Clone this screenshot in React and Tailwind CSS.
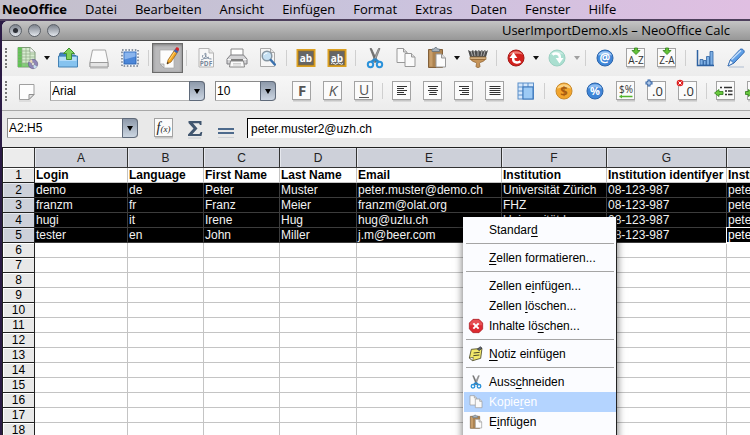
const sheetFont = 'font-["Liberation_Sans",Arial,sans-serif]';

/* ---------- toolbar drawings, all on a 24 x 24 field ---------- */

function Svg({ children, size = "size-6" }) {
  return (
    <svg viewBox="0 0 24 24" className={`${size} shrink-0`} fill="none" aria-hidden="true">
      {children}
    </svg>
  );
}

function Tile({ children }) {
  return (
    <Svg>
      <rect x="3" y="21" width="18" height="1.5" fill="#b5b5b5" opacity="0.7" />
      <rect x="2.500" y="2.500" width="18" height="18" fill="#fbfbfb" stroke="#a3a3a3" />
      {children}
    </Svg>
  );
}

function SvgText({ x = 12, y, size, fill = "#555", bold, italic, children }) {
  return (
    <text
      x={x}
      y={y}
      fontSize={size}
      fill={fill}
      textAnchor="middle"
      fontWeight={bold ? 700 : 400}
      fontStyle={italic ? "italic" : "normal"}
      fontFamily="Open Sans, sans-serif"
    >
      {children}
    </text>
  );
}

const SheetIcon = () => (
  <Svg>
    <path d="M3 1.5h12l5 4.500v15H3z" fill="#d7ecd0" stroke="#7d9a76" />
    <path d="M3 1.500h4v19.500H3z" fill="#5fc452" />
    <path d="M3 17h17v4H3z" fill="#5fc452" opacity="0.7" />
    <path d="M3 5h13M3 8h17M3 11h17M3 14h17M3 17h17M7 2v19M11 2v19M15 2v19" stroke="#8fae88" strokeWidth="0.7" />
    <path d="M15 1.500v4.500h5z" fill="#fff" stroke="#8b9a88" strokeWidth="0.600" />
    <circle cx="18" cy="18" r="4.700" fill="#8f86b8" stroke="#5f5b80" strokeWidth="0.600" />
    <path d="M18 18l-4-2.500a4.700 4.700 0 0 1 3-2z" fill="#e9d9b8" />
    <path d="M18 18l4 2.500a4.700 4.700 0 0 1-3 2z" fill="#c7e2ef" />
    <circle cx="18" cy="18" r="1.400" fill="#fff" stroke="#666" strokeWidth="0.500" />
  </Svg>
);
const OpenIcon = () => (
  <Svg>
    <path d="M4 7h6l1 2h8l2 3H3z" fill="#3f86c2" stroke="#336a9c" />
    <path d="M2.500 10h19v11h-19z" fill="#86c3ef" stroke="#4482b4" />
    <path d="M3.500 11h17v4h-17z" fill="#b4dcf8" />
    <path d="M13 2l5.500 5.500h-3v6h-5v-6h-3z" fill="#7fd05b" stroke="#3f9033" />
  </Svg>
);
const DriveIcon = () => (
  <Svg>
    <path d="M5.500 4h13l2.500 12v5H3v-5z" fill="#fafafa" stroke="#a6a6a6" />
    <path d="M3 16.500h18v4.500H3z" fill="#e4e4e4" stroke="#9b9b9b" />
    <path d="M3 22.300h18" stroke="#c9c9c9" />
  </Svg>
);
const StampIcon = () => (
  <Svg>
    <rect x="4" y="4" width="16" height="16" fill="#fff" stroke="#8d97a6" strokeWidth="2" strokeDasharray="1.600 1.600" />
    <rect x="5" y="5" width="14" height="14" fill="#fff" />
    <rect x="6" y="6" width="12" height="12" fill="#4c87d9" stroke="#2f66b4" />
    <path d="M6.500 6.500h11v4l-11 3z" fill="#8ab5ee" />
  </Svg>
);
const EditIcon = () => (
  <Svg>
    <path d="M4 4h14v18H8l-4-4z" fill="#fcfcfc" stroke="#aaa" strokeWidth="0.700" />
    <path d="M4 18h4v4z" fill="#ddd" stroke="#999" strokeWidth="0.700" />
    <path d="M11 18l1-4 7-10.500 3 2L15 16z" fill="#f5a623" stroke="#8d5a16" strokeWidth="0.700" />
    <path d="M13 14.500l7-10.500" stroke="#ffd978" />
    <path d="M17.800 5.200l3 2 1.800-2.600-3-2z" fill="#3e62b4" />
    <path d="M19.200 3.200l3 2 .8-1.700c.2-1.700-1.700-2.700-2.800-1.900z" fill="#d3262b" />
    <path d="M11 18l.5-2 1.400.9z" fill="#222" />
  </Svg>
);
const PdfIcon = () => (
  <Svg>
    <path d="M5 2.500h10l4.500 4.500v14H5z" fill="#f8f8f8" stroke="#b5b5b5" />
    <path d="M15 2.500v4.500h4.500" fill="#e8e8e8" stroke="#b5b5b5" />
    <path d="M7 14c4-1 6-5 4.500-7-1.500 0 0 6 6 6M9 9c-2 3 2 5 6 2" stroke="#7f8fa2" />
    <SvgText y={20} size={6.500} fill="#78889b" bold>PDF</SvgText>
  </Svg>
);
const PrintIcon = () => (
  <Svg>
    <path d="M6 3h12v8H6z" fill="#fff" stroke="#888" />
    <path d="M5.500 9h13l3.500 4v5H2v-5z" fill="#d4d4d6" stroke="#7f7f82" />
    <path d="M2.500 13.500h19" stroke="#f8f8f8" />
    <path d="M6 14h12" stroke="#555" strokeWidth="1.500" />
    <path d="M5.500 15h13l1 6h-15z" fill="#f9f9f9" stroke="#888" />
    <path d="M8 17.500h8M8 19h8" stroke="#bbb" strokeWidth="0.700" />
  </Svg>
);
const PreviewIcon = () => (
  <Svg>
    <path d="M4.500 2.500h10l4 4v14h-14z" fill="#f6f6f6" stroke="#a9a9a9" />
    <path d="M14.500 2.500v4h4" fill="#e4e4e4" stroke="#a9a9a9" />
    <circle cx="11" cy="10" r="4.800" fill="#c5e0f3" stroke="#8796a2" strokeWidth="1.500" />
    <path d="M8.300 9a3 3 0 0 1 3-2" stroke="#fff" />
    <path d="M14.800 14l4 4.500" stroke="#3a71ae" strokeWidth="2.500" strokeLinecap="round" />
  </Svg>
);
const SpellIcon = ({ wave }) => (
  <Svg>
    <rect x="3.500" y="4" width="17" height="16" fill="#666" stroke="#dba022" strokeWidth="2" />
    <rect x="4.500" y="5" width="15" height="14" stroke="#8c6b2a" strokeWidth="0.700" />
    <SvgText y={15.500} size={10} fill="#fff" bold>ab</SvgText>
    {wave && <path d="M6 17.500q1.500-1.500 3 0t3 0 3 0 3 0" stroke="#fff" strokeWidth="1" />}
  </Svg>
);
const CutIcon = ({ size }) => (
  <Svg size={size}>
    <path d="M7 2.500l1.500 0 5.500 12-1.500 2z" fill="#777" stroke="#555" strokeWidth="0.600" />
    <path d="M17 2.500l-1.500 0-5.500 12 1.500 2z" fill="#aaa" stroke="#555" strokeWidth="0.600" />
    <path d="M12 13l-3.500 3M12 13l3.500 3" stroke="#2b87c9" strokeWidth="2.500" />
    <circle cx="7.500" cy="18.500" r="2.700" stroke="#2b92da" strokeWidth="2" />
    <circle cx="16.500" cy="18.500" r="2.700" stroke="#2b92da" strokeWidth="2" />
  </Svg>
);
const CopyIcon = ({ size }) => (
  <Svg size={size}>
    <path d="M3 2.500h6.500l3.500 3.500v10.500H3z" fill="#fafafa" stroke="#989898" />
    <path d="M9.500 2.500v3.500h3.500" fill="#ddd" stroke="#989898" />
    <path d="M11 7.500h6.500l3.500 3.500v9.500H11z" fill="#fafafa" stroke="#989898" />
    <path d="M17.500 7.500v3.500h3.500" fill="#ddd" stroke="#989898" />
  </Svg>
);
const PasteIcon = ({ size }) => (
  <Svg size={size}>
    <path d="M3.500 3.500h14v18h-14z" fill="#ad8350" stroke="#82603a" />
    <path d="M4.500 4.500h3v16h-3z" fill="#c79d69" />
    <path d="M7 5.500v-2.500h2l1-1.500h1.500l1 1.500h2v2.500z" fill="#a7b2bd" stroke="#66717b" strokeWidth="0.800" />
    <path d="M11 8h5.500l4 4v9H11z" fill="#fcfcfc" stroke="#989898" />
    <path d="M16.500 8v4h4" fill="#ddd" stroke="#989898" />
  </Svg>
);
const BrushIcon = () => (
  <Svg>
    <path d="M2 4l2 7h16l2-7-2 1.500-1-1.500-2 1.500-1-1.500-2 1.500-1-1.500-2 1.500-1-1.500-2 1.500-1-1.500-2 1.500z" fill="#4d4d4d" />
    <path d="M5 5l1.500 5M8 5l1 5M12 5v5M16 5l-1 5M19 5l-1.500 5" stroke="#c4c4c4" strokeWidth="0.800" />
    <path d="M4 11h16v2.500H4z" fill="#d5b080" stroke="#946d3e" strokeWidth="0.700" />
    <path d="M5 13.500h14c-1 3-5.500 2-5.500 4l.5 3c0 1.300-4 1.300-4 0l.5-3C10.500 15.500 6 16.500 5 13.500z" fill="#c69459" stroke="#8a5f2e" strokeWidth="0.700" />
  </Svg>
);
const UndoIcon = () => (
  <Svg>
    <circle cx="12" cy="12" r="8" fill="#d3201d" stroke="#a31915" />
    <path d="M5 9a7.500 6 0 0 1 14 0c-4-2-10-1-14 0z" fill="#ee7b74" />
    <path d="M16.500 15.300c-2.500 2-7.300 1.500-7.300-2.300v-1.500" stroke="#fff" strokeWidth="2.500" />
    <path d="M5.500 12L9.500 6.500l3.800 5.500z" fill="#fff" />
  </Svg>
);
const RedoIcon = () => (
  <Svg>
    <circle cx="12" cy="12" r="8" fill="#aadfd0" stroke="#9bd0c2" />
    <path d="M5 9a7.500 6 0 0 1 14 0c-4-2-10-1-14 0z" fill="#c8ece2" />
    <path d="M7.500 8.700c2.500-2 7.300-1.500 7.300 2.300v1.500" stroke="#fff" strokeWidth="2.500" />
    <path d="M18.500 12l-4 5.500-3.800-5.500z" fill="#fff" />
  </Svg>
);
const Ball = ({ fill, edge, shine, children }) => (
  <Svg>
    <circle cx="12" cy="12" r="8" fill={fill} stroke={edge} />
    <path d="M5 9.500a7.500 6.500 0 0 1 14 0c-4-1.500-10-1.500-14 0z" fill={shine} />
    {children}
  </Svg>
);
const SortIcon = ({ label }) => (
  <Tile>
    <path d="M10.500 2h3v2.500h2.500l-4 4-4-4h2.500z" fill="#63c437" stroke="#2f7d1b" strokeWidth="0.800" />
    <SvgText y={18} size={10} fill="#333">{label}</SvgText>
  </Tile>
);
const ChartIcon = () => (
  <Svg>
    <path d="M4.500 4v15.500H21" stroke="#2d62a2" strokeWidth="1.500" />
    <path d="M7 13.500h3V19H7zM10.500 14.500h2.500V19h-2.500zM13.500 10.500h3V19h-3zM17 5.500h3V19h-3z" fill="#7fb0e4" stroke="#2d62a2" strokeWidth="0.800" />
  </Svg>
);
const PenIcon = () => (
  <Svg>
    <path d="M5 21h15" stroke="#c4cedb" strokeWidth="1.500" />
    <path d="M4 20l2.500-6.500L16 3.500c2-1.500 5 1 4 3L10 17z" fill="#5f9fe6" stroke="#2d65ae" />
    <path d="M7.500 13.500L17 4.500" stroke="#c3ddfa" strokeWidth="1.600" />
    <path d="M4 20l2.300-6 3.200 3z" fill="#f2f7fd" stroke="#2d65ae" strokeWidth="0.700" />
  </Svg>
);
const PageIcon = () => (
  <Svg>
    <path d="M4.500 5.500h14.500v10l-5 5H4.500z" fill="#fdfdfd" stroke="#9f9f9f" />
    <path d="M19 15.500h-5v5z" fill="#e2e2e2" stroke="#8f8f8f" />
    <path d="M4 22h12" stroke="#ccc" />
  </Svg>
);
const LinesIcon = ({ d }) => (
  <Tile>
    <path d={d} stroke="#333" strokeWidth="1" />
  </Tile>
);
const MergeIcon = () => (
  <Svg>
    <rect x="4" y="4" width="15.500" height="16" fill="#d5e7fa" stroke="#5b8fca" />
    <path d="M4 8h15.500M4 12h5M4 16h5M9 4v16M14 4v4" stroke="#5b8fca" strokeWidth="1" />
    <rect x="9" y="8" width="10" height="12" fill="#9ccaf5" stroke="#3974b8" />
  </Svg>
);
const CurrencyIcon = () => (
  <Tile>
    <SvgText y={13.500} size={10} fill="#333">$%</SvgText>
    <path d="M5.500 17.500h13" stroke="#52b52d" strokeWidth="1.300" />
    <path d="M8 15.500l-2.500 2 2.500 2" fill="#52b52d" />
  </Tile>
);
const DecimalIcon = ({ remove }) => (
  <Tile>
    <SvgText x={12.500} y={17} size={13} fill="#333">.0</SvgText>
    {remove ? (
      <g>
        <circle cx="4" cy="4" r="3.300" fill="#df2323" />
        <path d="M2.500 2.500l3 3m0-3l-3 3" stroke="#fff" />
      </g>
    ) : (
      <g>
        <path d="M4 0.500v7M0.500 4h7" stroke="#2a5ea5" strokeWidth="3" />
        <path d="M4 1.500v5M1.500 4h5" stroke="#d9e8fa" strokeWidth="1" />
      </g>
    )}
  </Tile>
);
const IndentIcon = ({ right }) => (
  <Tile>
    <path d="M6 8.500h2M10 8.500h8M11 12h2M14 12h4.500M11 15.500h2M14 15.500h4.500" stroke="#333" strokeWidth="1.300" />
    <path
      d={right ? "M8 14l-4.500-3.500v2h-3v3h3v2z" : "M0.500 14l4.500-3.500v2h4v3h-4v2z"}
      fill="#69c93d"
      stroke="#2f7d1b"
      strokeWidth="0.800"
    />
  </Tile>
);
const FunctionIcon = () => (
  <Tile>
    <text x="11.500" y="16" fontSize="14" fontStyle="italic" fill="#222" textAnchor="middle" fontFamily="Liberation Serif, serif">
      f<tspan fontSize="9">(x)</tspan>
    </text>
  </Tile>
);
const SumIcon = () => (
  <Svg>
    <path d="M5.500 5h13v4h-1.500l-1-1.700H10l4.500 5.200-5 5.500h7l1.300-2h1.500l-.8 4H5v-1.500l5.500-6L5.500 7z" fill="#41566f" />
    <path d="M5 22h13" stroke="#c8cbd0" />
  </Svg>
);
const EqualsIcon = () => (
  <Svg>
    <path d="M4 13h16M4 17h16" stroke="#4d6a8c" strokeWidth="1.800" />
    <path d="M4 21.500h16" stroke="#cfd2d6" />
  </Svg>
);
const DeleteIcon = ({ size }) => (
  <Svg size={size}>
    <path d="M7.500 2h9L22 7.500v9L16.500 22h-9L2 16.500v-9z" fill="#dc2a31" stroke="#a5171d" />
    <path d="M7.500 3h9L21 7.500V11H3V7.500z" fill="#ee6a6d" opacity="0.600" />
    <path d="M8 8l8 8m0-8l-8 8" stroke="#fff" strokeWidth="3" />
  </Svg>
);
const NoteIcon = ({ size }) => (
  <Svg size={size}>
    <path d="M5 5l16-1.500-2 15L7 22l-5-4z" fill="#f3e96a" stroke="#4b4a2c" strokeWidth="1.300" />
    <path d="M2 18l6-1-1 5z" fill="#fff" stroke="#4b4a2c" />
    <path d="M8.500 10.500l9-1M8 14.500l9-1" stroke="#4b4a2c" strokeWidth="1.500" />
    <path d="M14 5l4-4 3 2-4 4z" fill="#5a6272" stroke="#333" />
  </Svg>
);

/* ---------- toolbar parts ---------- */

function Tool({ label, children, pressed }) {
  return (
    <button
      type="button"
      aria-label={label}
      className={
        pressed
          ? "flex h-[30px] w-[31px] shrink-0 items-center justify-center border border-[#6b6b6b] bg-[#b9b9bb] shadow-[inset_0_1px_3px_#777]"
          : "flex h-[30px] w-[31px] shrink-0 items-center justify-center"
      }
    >
      {children}
    </button>
  );
}
const Sep = () => <span className="mx-[3px] h-4 w-px shrink-0 bg-[#cfcfcf]" />;
const Grip = () => <span className="mr-1 h-5 w-0 shrink-0 border-l-2 border-dotted border-[#777]" />;
function More({ label, faint }) {
  return (
    <button type="button" aria-label={label} className="flex w-2.5 shrink-0 items-center justify-center">
      <svg viewBox="0 0 6 4" className="h-1 w-1.5">
        <path d="M0 0h6L3 4z" fill={faint ? "#a0a0a0" : "#111"} />
      </svg>
    </button>
  );
}
function Combo({ label, value, width }) {
  return (
    <div className={`relative h-5 shrink-0 ${width}`}>
      <select
        aria-label={label}
        className="block h-5 w-full appearance-none rounded-r border border-[#8a8a8a] border-b-[#b5b5b5] bg-white px-px text-xs text-black"
      >
        <option>{value}</option>
      </select>
      <span className="pointer-events-none absolute inset-y-0 right-0 flex w-4 items-center justify-center rounded-r border border-[#5f6a7a] bg-linear-to-b from-[#8d99aa] to-[#ccd6e2]">
        <svg viewBox="0 0 6 5" className="h-[5px] w-1.5">
          <path d="M0 0h6L3 5z" fill="#000" />
        </svg>
      </span>
    </div>
  );
}

/* ---------- data ---------- */

const menus = ["Datei", "Bearbeiten", "Ansicht", "Einfügen", "Format", "Extras", "Daten", "Fenster", "Hilfe"];
const columns = [
  ["A", "w-[93px]"],
  ["B", "w-[76px]"],
  ["C", "w-[76px]"],
  ["D", "w-[77px]"],
  ["E", "w-[145px]"],
  ["F", "w-[105px]"],
  ["G", "w-[120px]"],
  ["H", "w-[120px]"],
];
const data = [
  ["Login", "Language", "First Name", "Last Name", "Email", "Institution", "Institution identifyer", "Institution"],
  ["demo", "de", "Peter", "Muster", "peter.muster@demo.ch", "Universität Zürich", "08-123-987", "peter.muster"],
  ["franzm", "fr", "Franz", "Meier", "franzm@olat.org", "FHZ", "08-123-987", "peter.muster"],
  ["hugi", "it", "Irene", "Hug", "hug@uzlu.ch", "Universität Luzern", "08-123-987", "peter.muster"],
  ["tester", "en", "John", "Miller", "j.m@beer.com", "", "08-123-987", "peter.muster"],
];
const rows = Array.from({ length: 18 }, (_, i) => data[i] ?? Array(8).fill(""));

const context = [
  ["Standar", "d", ""],
  null,
  ["", "Z", "ellen formatieren..."],
  null,
  ["Zellen e", "i", "nfügen..."],
  ["Zellen ", "l", "öschen..."],
  ["Inhalte lö", "s", "chen...", DeleteIcon],
  null,
  ["", "N", "otiz einfügen", NoteIcon],
  null,
  ["Auss", "c", "hneiden", CutIcon],
  ["Kopie", "r", "en", CopyIcon],
  ["E", "i", "nfügen", PasteIcon],
];

function cellClass(r, c) {
  const base = "h-[15px] overflow-hidden border-r border-b px-px text-left leading-[14px] whitespace-nowrap ";
  if (r === 4 && c === 7) return base + "border-white bg-black text-white outline outline-white";
  if (r >= 1 && r <= 4) return base + "border-[#3c3c3c] bg-black text-[#f2f2f2]";
  if (r === 0) return base + "border-[#c4c4c4] bg-white font-bold text-black";
  return base + "border-[#c4c4c4] bg-white";
}

function Sheet() {
  return (
    <table className="w-[845px] table-fixed border-separate border-spacing-0 border-t border-l border-[#222] text-xs">
      <thead>
        <tr>
          <th className="h-5 w-8 border-r border-b border-[#333] bg-[#ececec] shadow-[inset_1px_1px_#fff]" aria-label="Select all" />
          {columns.map(([name, width]) => (
            <th
              key={name}
              scope="col"
              className={`${width} border-r border-b border-[#333] bg-[#cdd0d9] font-normal text-[#222] shadow-[inset_1px_1px_#e6e8ee]`}
            >
              {name}
            </th>
          ))}
        </tr>
      </thead>
      <tbody>
        {rows.map((row, r) => (
          <tr key={r}>
            <th
              scope="row"
              className={
                r >= 1 && r <= 4
                  ? "h-[15px] border-r border-b border-[#222] bg-[#cdd0d9] leading-[14px] font-normal shadow-[inset_1px_1px_#e6e8ee]"
                  : "h-[15px] border-r border-b border-[#222] bg-[#e8e8e8] leading-[14px] font-normal shadow-[inset_1px_1px_#fff]"
              }
            >
              {r + 1}
            </th>
            {row.map((text, c) => (
              <td key={c} className={cellClass(r, c)}>{text}</td>
            ))}
          </tr>
        ))}
      </tbody>
    </table>
  );
}

function ContextMenu() {
  return (
    <div
      role="menu"
      className="absolute top-[217px] left-[463px] h-[260px] w-[154px] border-r border-[#222] bg-[#fbfcff] pt-[3px] pl-px text-xs text-black shadow-[0_2px_8px_rgba(0,0,0,0.6)]"
    >
      {context.map((item, i) => {
        if (!item) return <div key={i} role="separator" className="mx-0.5 mt-[3px] mb-1 h-px bg-[#a5a5a5]" />;
        const [before, key, after, Icon] = item;
        return (
          <button
            key={i}
            type="button"
            role="menuitem"
            className={
              before === "Kopie"
                ? "flex h-5 w-full items-center bg-[#b4d4ff] text-white"
                : "flex h-5 w-full items-center"
            }
          >
            <span className="flex w-[25px] shrink-0 justify-center pr-0.5">{Icon && <Icon size="size-4" />}</span>
            <span className="whitespace-pre">
              {before}
              <span className="underline underline-offset-2">{key}</span>
              {after}
            </span>
          </button>
        );
      })}
    </div>
  );
}

export default function App() {
  return (
    <div className={`relative flex h-screen flex-col overflow-hidden bg-[#2b1b45] ${sheetFont}`}>
      <nav className='flex h-[21px] shrink-0 items-center gap-[18px] border-b-2 border-[#4d3f5c] bg-linear-to-r from-[#c3bfca] via-[#c9c3dd] to-[#e0bfe2] pl-0.5 font-["Open_Sans",sans-serif] text-[13px] text-black'>
        <button type="button" className="font-bold">NeoOffice</button>
        {menus.map((m) => (
          <button key={m} type="button">{m}</button>
        ))}
      </nav>

      <div className="ml-0.5 flex min-h-0 flex-1 flex-col overflow-hidden rounded-tl-md bg-[#ededed]">
        <header className="flex h-5 shrink-0 items-center border-b border-[#4a4a4a] bg-linear-to-b from-[#c4c4c4] to-[#979797] pr-5 pl-[7px]">
          <div className="flex gap-1.5">
            {["Close", "Minimize", "Zoom"].map((n) => (
              <button
                key={n}
                type="button"
                aria-label={n}
                className="flex size-[13px] items-center justify-center rounded-full border border-[#5b6068] bg-linear-to-b from-[#7c828c] to-[#e4e8ee]"
              >
                {n === "Close" && <span className="size-[5px] rounded-full bg-[#2c2f36]" />}
              </button>
            ))}
          </div>
          <h1 className='ml-auto font-["Open_Sans",sans-serif] text-[13px] whitespace-nowrap text-black'>
            UserImportDemo.xls – NeoOffice Calc
          </h1>
        </header>

        <div className="flex h-[35px] shrink-0 items-center bg-linear-to-b from-[#f7f7f7] to-[#ececec] pb-0.5 pl-[3px]">
          <Grip />
          <Tool label="New"><SheetIcon /></Tool>
          <More label="New document type" />
          <Tool label="Open"><OpenIcon /></Tool>
          <Tool label="Save"><DriveIcon /></Tool>
          <Tool label="Mail"><StampIcon /></Tool>
          <Sep />
          <Tool label="Edit file" pressed><EditIcon /></Tool>
          <Sep />
          <Tool label="Export PDF"><PdfIcon /></Tool>
          <Tool label="Print"><PrintIcon /></Tool>
          <Tool label="Preview"><PreviewIcon /></Tool>
          <Sep />
          <Tool label="Spelling"><SpellIcon /></Tool>
          <Tool label="Auto spelling"><SpellIcon wave /></Tool>
          <Sep />
          <Tool label="Cut"><CutIcon /></Tool>
          <Tool label="Copy"><CopyIcon /></Tool>
          <Tool label="Paste"><PasteIcon /></Tool>
          <More label="Paste options" />
          <Tool label="Format brush"><BrushIcon /></Tool>
          <Sep />
          <Tool label="Undo"><UndoIcon /></Tool>
          <More label="Undo history" />
          <Tool label="Redo"><RedoIcon /></Tool>
          <More label="Redo history" faint />
          <Sep />
          <Tool label="Hyperlink">
            <Ball fill="#3f86d8" edge="#2b64ab" shine="#9cc6f4"><SvgText y={16} size={12} fill="#fff" bold>@</SvgText></Ball>
          </Tool>
          <Tool label="Sort ascending"><SortIcon label="A-Z" /></Tool>
          <Tool label="Sort descending"><SortIcon label="Z-A" /></Tool>
          <Sep />
          <Tool label="Chart"><ChartIcon /></Tool>
          <Tool label="Draw"><PenIcon /></Tool>
        </div>

        <div className="flex h-[35px] shrink-0 items-center border-b border-[#a8a8a8] bg-linear-to-b from-[#f7f7f7] to-[#ececec] pb-1 pl-[3px]">
          <Grip />
          <Tool label="Styles"><PageIcon /></Tool>
          <span className="w-2 shrink-0" />
          <Combo label="Font" value="Arial" width="w-[155px]" />
          <span className="w-2.5 shrink-0" />
          <Combo label="Size" value="10" width="w-[61px]" />
          <span className="w-2.5 shrink-0" />
          <Tool label="Bold"><Tile><SvgText y={17} size={15} bold>F</SvgText></Tile></Tool>
          <Tool label="Italic"><Tile><SvgText y={17} size={15} italic>K</SvgText></Tile></Tool>
          <Tool label="Underline">
            <Tile><SvgText y={16} size={14}>U</SvgText><path d="M7 18.500h10" stroke="#555" /></Tile>
          </Tool>
          <Sep />
          <Tool label="Align left"><LinesIcon d="M7 7.500h10M7 9.500h7M7 11.500h10M7 13.500h7M7 15.500h9" /></Tool>
          <Tool label="Center"><LinesIcon d="M7 7.500h10M8.500 9.500h7M7 11.500h10M8.500 13.500h7M8 15.500h8" /></Tool>
          <Tool label="Align right"><LinesIcon d="M7 7.500h10M10 9.500h7M7 11.500h10M10 13.500h7M8 15.500h9" /></Tool>
          <Tool label="Justify"><LinesIcon d="M6.500 7.500h11M6.500 9.500h11M6.500 11.500h11M6.500 13.500h11M6.500 15.500h11" /></Tool>
          <Tool label="Merge cells"><MergeIcon /></Tool>
          <Sep />
          <Tool label="Currency">
            <Ball fill="#f2a52d" edge="#c98a2c" shine="#fbd283"><SvgText y={17} size={13} fill="#a85c11" bold>$</SvgText></Ball>
          </Tool>
          <Tool label="Percent">
            <Ball fill="#3f86d8" edge="#2b64ab" shine="#8fbdf0"><SvgText y={16} size={11} fill="#fff" bold>%</SvgText></Ball>
          </Tool>
          <Tool label="Standard format"><CurrencyIcon /></Tool>
          <Tool label="Add decimal"><DecimalIcon /></Tool>
          <Tool label="Delete decimal"><DecimalIcon remove /></Tool>
          <Sep />
          <Tool label="Decrease indent"><IndentIcon /></Tool>
          <Tool label="Increase indent"><IndentIcon right /></Tool>
        </div>

        <div className="flex h-9 shrink-0 items-center bg-[#e9e9e9] pb-0.5 pl-[5px]">
          <Combo label="Name box" value="A2:H5" width="w-[131px]" />
          <span className="w-2.5 shrink-0" />
          <Tool label="Function wizard"><FunctionIcon /></Tool>
          <Tool label="Sum"><SumIcon /></Tool>
          <Tool label="Function"><EqualsIcon /></Tool>
          <input
            aria-label="Input line"
            defaultValue="peter.muster2@uzh.ch"
            className="ml-1.5 h-5 min-w-0 flex-1 border-t border-l border-black bg-white px-[3px] text-xs text-black"
          />
        </div>

        <main className="min-h-0 flex-1 overflow-hidden bg-white">
          <Sheet />
        </main>
      </div>

      <ContextMenu />
    </div>
  );
}
